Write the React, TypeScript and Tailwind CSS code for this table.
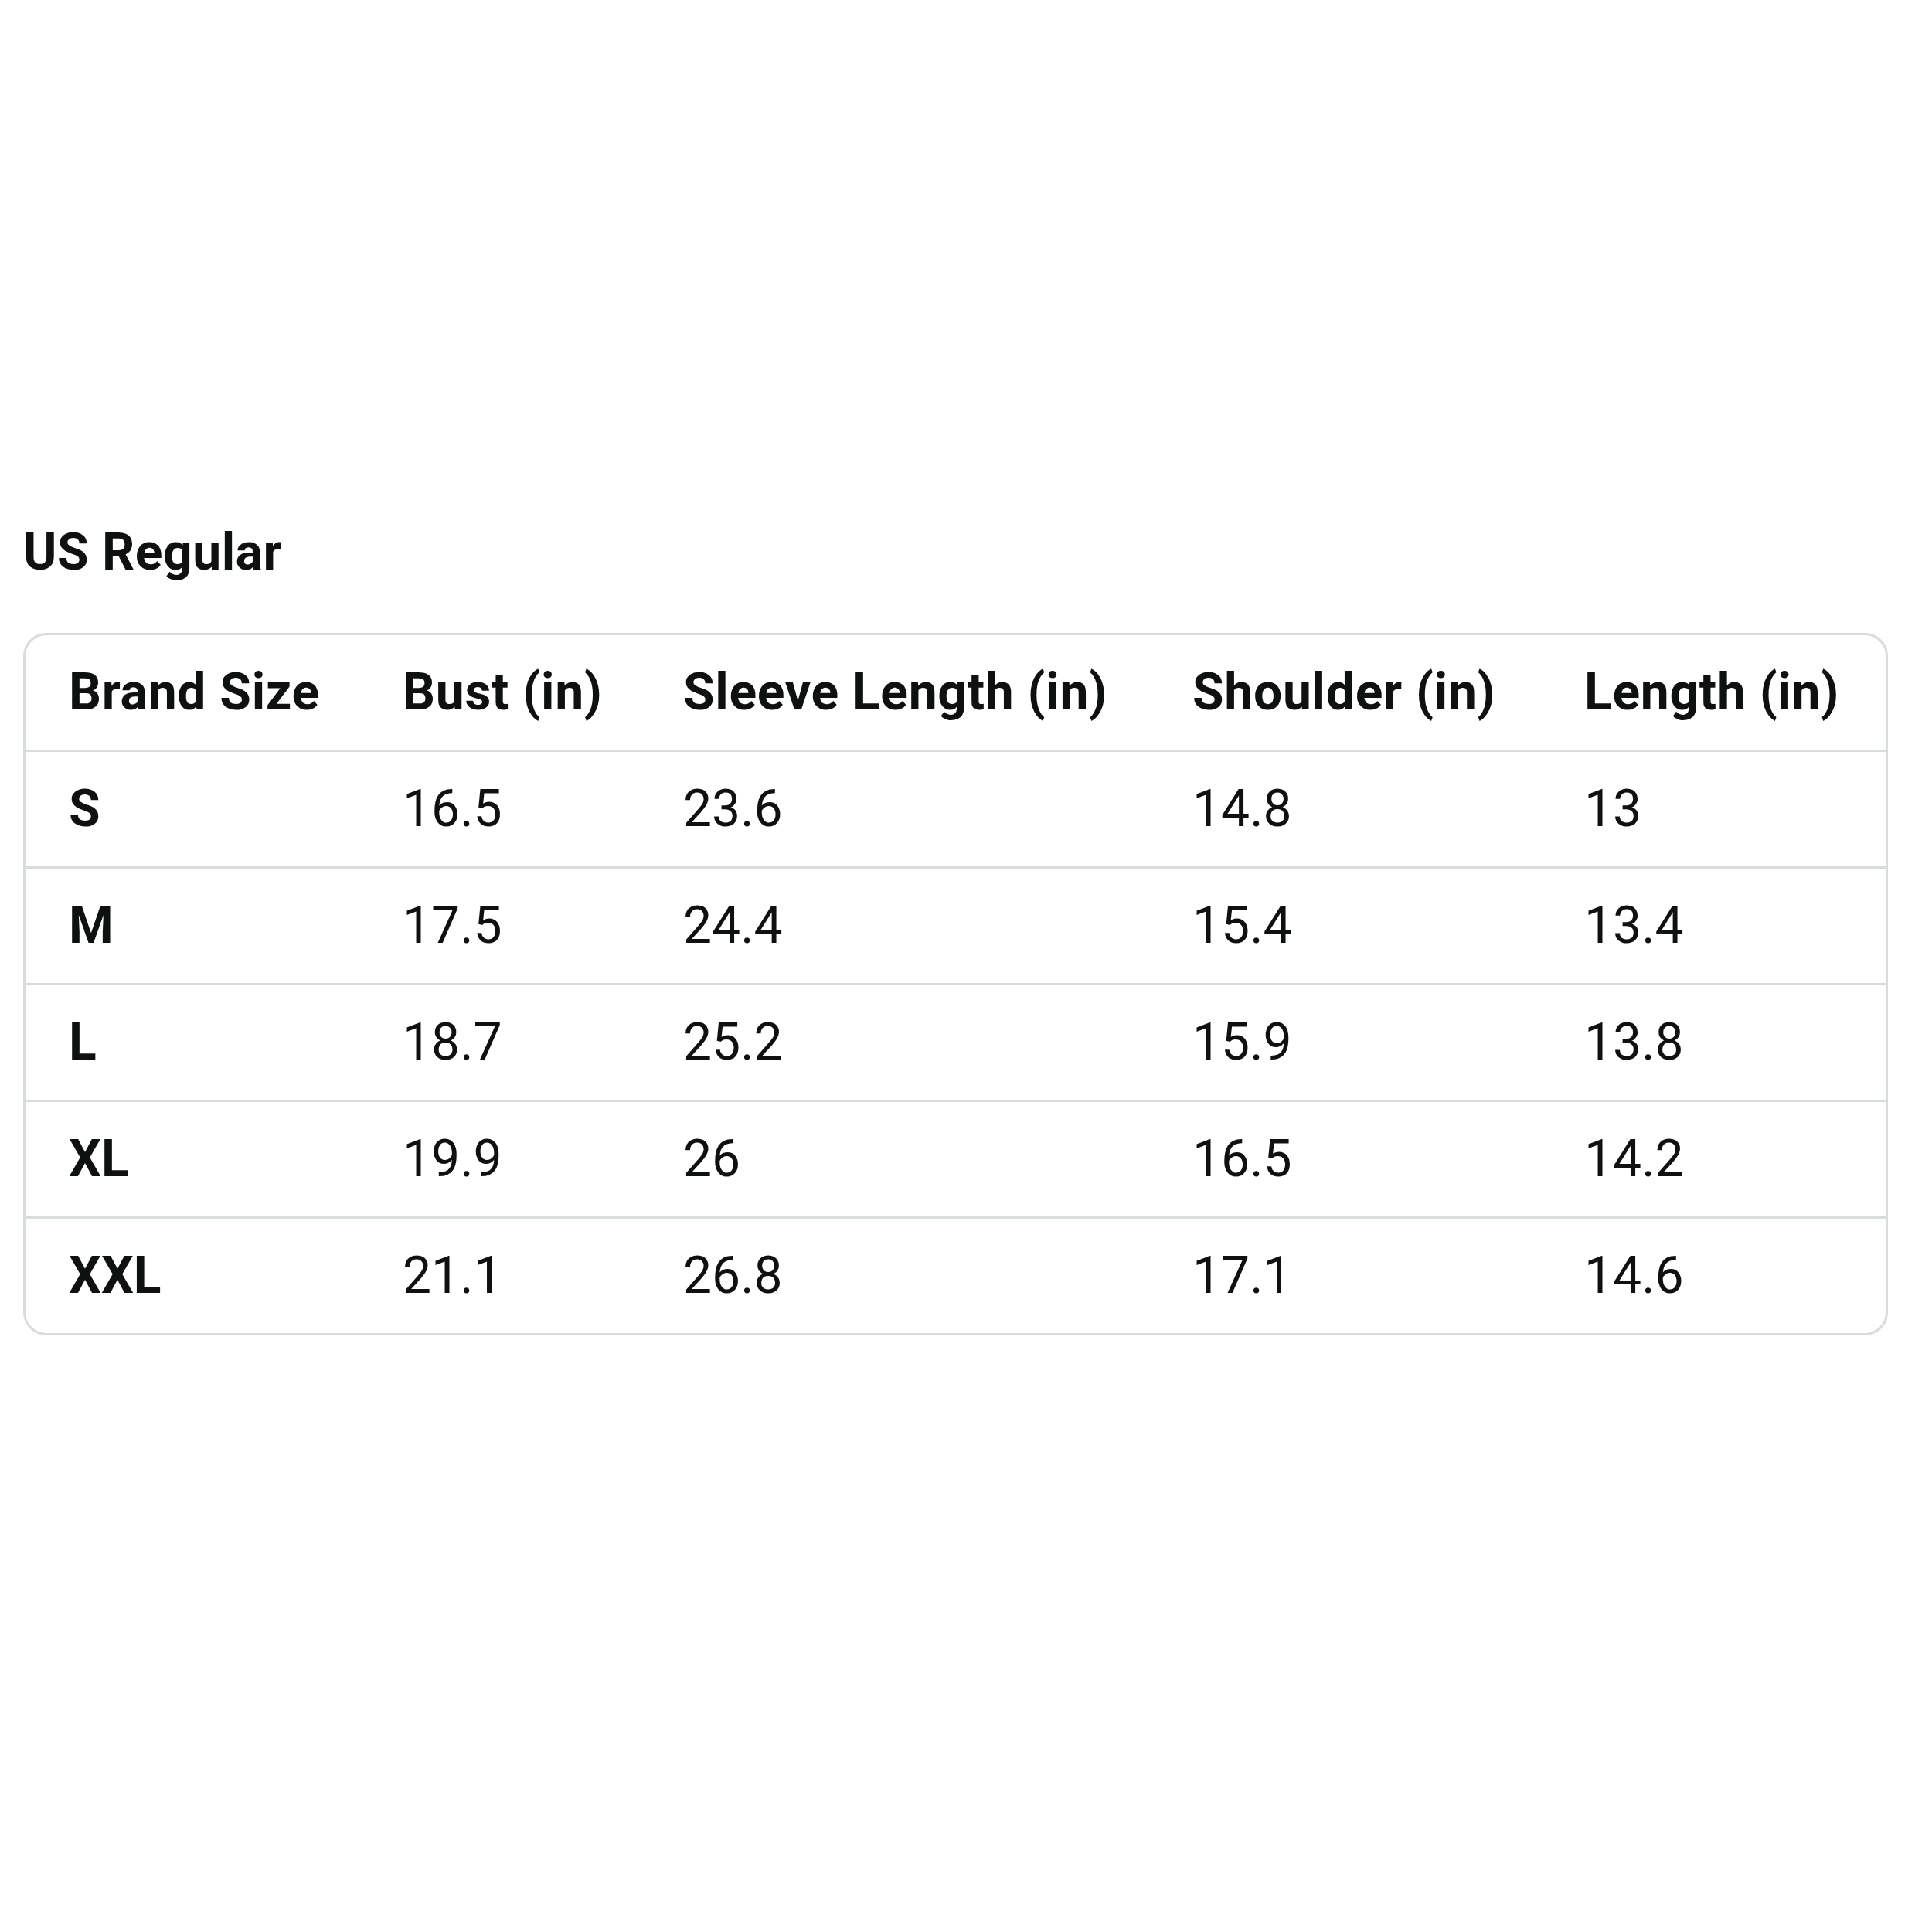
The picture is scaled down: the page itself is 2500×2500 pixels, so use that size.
import React from 'react';

const headers = ['Brand Size', 'Bust (in)', 'Sleeve Length (in)', 'Shoulder (in)', 'Length (in)'];

const rows = [
  ['S', '16.5', '23.6', '14.8', '13'],
  ['M', '17.5', '24.4', '15.4', '13.4'],
  ['L', '18.7', '25.2', '15.9', '13.8'],
  ['XL', '19.9', '26', '16.5', '14.2'],
  ['XXL', '21.1', '26.8', '17.1', '14.6'],
];

const SizeChart = () => {
  return (
    <div className="min-h-[2500px] w-[2500px] bg-white pl-[30px] pt-[675px] font-[Roboto,sans-serif] text-[#0f1111]">
      <h2 className="h-[80px] text-[66px] font-bold leading-[80px] tracking-[0.5px]">US Regular</h2>
      <div className="mt-[64px] w-[2413px] overflow-hidden rounded-[30px] border-[3px] border-[#d9dcdc]">
        <div className="grid h-[151px] grid-cols-[432px_363px_659px_507px_446px] items-center border-b-[3px] border-[#d9dcdc]">
          {headers.map((h) => (
            <div key={h} className="pl-[56px] text-[66px] font-bold leading-none tracking-[0.7px]">
              {h}
            </div>
          ))}
        </div>
        {rows.map((row, i) => (
          <div
            key={row[0]}
            className={
              i < rows.length - 1
                ? 'grid h-[151px] grid-cols-[432px_363px_659px_507px_446px] items-center border-b-[3px] border-[#d9dcdc]'
                : 'grid h-[148px] grid-cols-[432px_363px_659px_507px_446px] items-center'
            }
          >
            {row.map((cell, j) => (
              <div
                key={j}
                className={j === 0 ? 'pl-[56px] text-[66px] font-bold leading-none' : 'pl-[56px] text-[66px] font-normal leading-none'}
              >
                {cell}
              </div>
            ))}
          </div>
        ))}
      </div>
    </div>
  );
};

export default SizeChart;
